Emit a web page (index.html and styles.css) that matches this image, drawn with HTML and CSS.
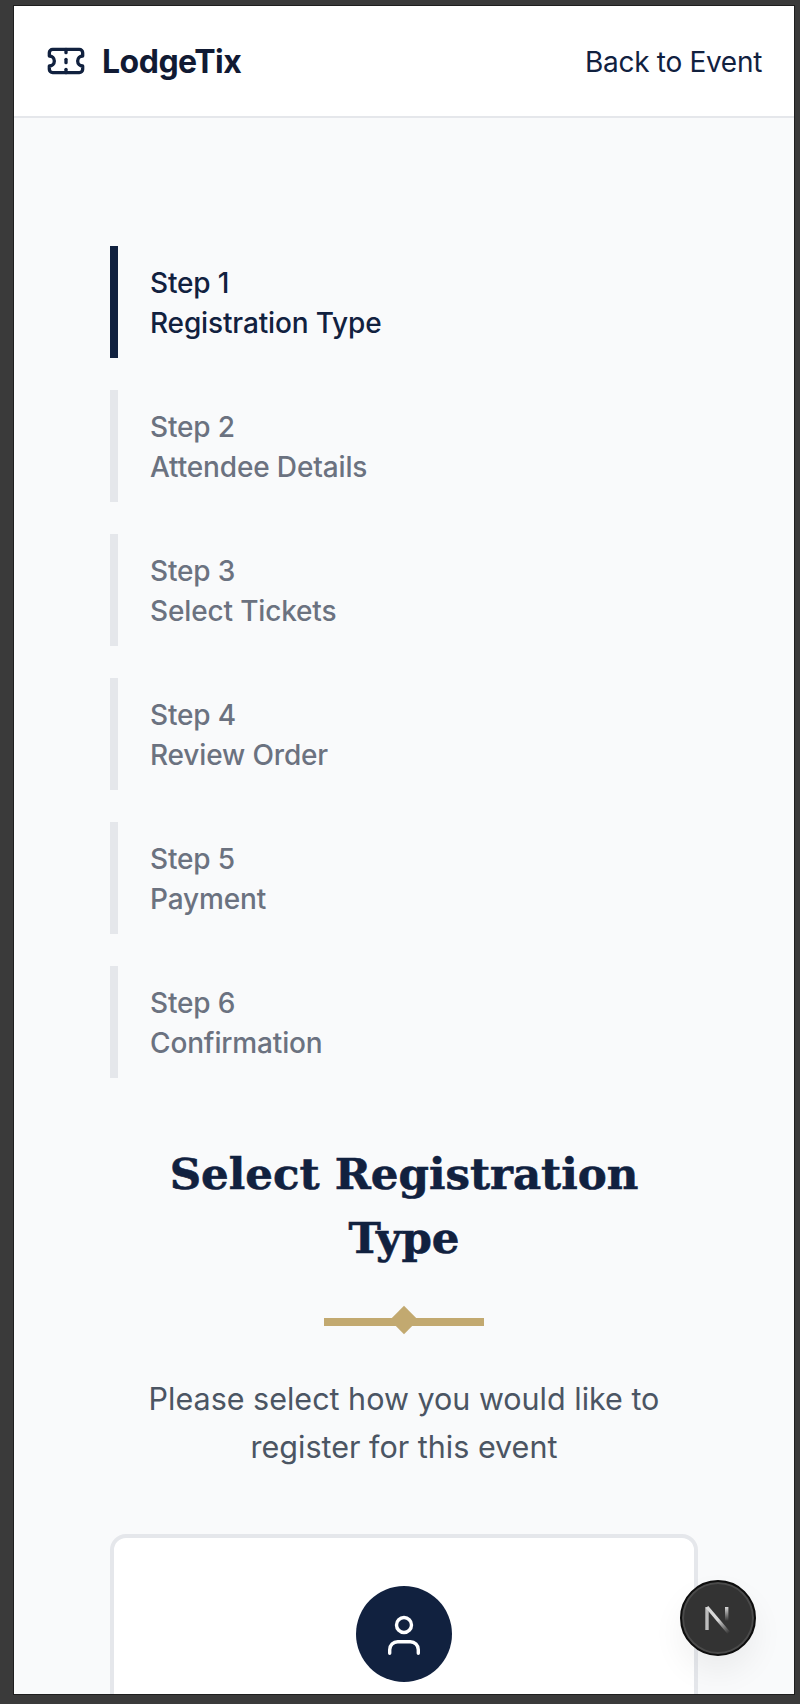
FILE: index.html
```html
<!DOCTYPE html>
<html lang="en">
<head>
    <meta charset="UTF-8">
    <meta name="viewport" content="width=device-width, initial-scale=1.0">
    <title>LodgeTix - Registration</title>
    <link rel="stylesheet" href="styles.css">
</head>
<body>
    <div class="window">
        <header class="topbar">
            <a class="brand" href="#">
                <svg class="brand-icon" viewBox="0 0 24 24" fill="none" stroke="#11213f" stroke-width="2" stroke-linecap="round" stroke-linejoin="round">
                    <path d="M2 9a3 3 0 0 1 0 6v2a2 2 0 0 0 2 2h16a2 2 0 0 0 2-2v-2a3 3 0 0 1 0-6V7a2 2 0 0 0-2-2H4a2 2 0 0 0-2 2Z"/>
                    <path d="M12 5v2"/>
                    <path d="M12 17v2"/>
                    <path d="M12 11v2"/>
                </svg>
                <span>LodgeTix</span>
            </a>
            <a class="back-link" href="#">Back to Event</a>
        </header>

        <main class="content">
            <ol class="steps">
                <li class="step active">Step 1<br>Registration Type</li>
                <li class="step">Step 2<br>Attendee Details</li>
                <li class="step">Step 3<br>Select Tickets</li>
                <li class="step">Step 4<br>Review Order</li>
                <li class="step">Step 5<br>Payment</li>
                <li class="step">Step 6<br>Confirmation</li>
            </ol>

            <section class="intro">
                <h1>Select Registration Type</h1>
                <div class="divider"><span class="diamond"></span></div>
                <p>Please select how you would like to register for this event</p>
            </section>

            <div class="card">
                <div class="card-icon">
                    <svg viewBox="0 0 48 48" width="48" height="48" fill="none" stroke="#fff" stroke-width="3.4" stroke-linecap="round">
                        <circle cx="24" cy="15" r="7.5"/>
                        <path d="M9.7 43.3v-3.6a8 8 0 0 1 8-8h12.6a8 8 0 0 1 8 8v3.6"/>
                    </svg>
                </div>
            </div>
        </main>

        <button class="dev-badge" type="button" aria-label="Open Next.js Dev Tools">
            <svg viewBox="0 0 32 32" width="32" height="32" fill="none" stroke-width="3.4">
                <defs>
                    <linearGradient id="fadeStem" x1="0" y1="0" x2="0" y2="1">
                        <stop offset="0" stop-color="#d8d8d8"/>
                        <stop offset="1" stop-color="#d8d8d8" stop-opacity="0"/>
                    </linearGradient>
                    <linearGradient id="fadeDiag" gradientUnits="userSpaceOnUse" x1="5" y1="5" x2="27" y2="31">
                        <stop offset="0.5" stop-color="#d8d8d8"/>
                        <stop offset="1" stop-color="#d8d8d8" stop-opacity="0"/>
                    </linearGradient>
                </defs>
                <path d="M5 28V5" stroke="#bdbdbd"/>
                <path d="M5 5L27 31" stroke="url(#fadeDiag)"/>
                <rect x="23" y="5" width="3.4" height="14" fill="url(#fadeStem)" stroke="none"/>
            </svg>
        </button>
    </div>
</body>
</html>
```

FILE: styles.css
```css
* {
    box-sizing: border-box;
}
html, body {
    height: 100%;
}
body {
    margin: 0;
    padding: 5px 5px 9px 13px;
    background-color: #3a3a3a;
    font-family: Inter, "Noto Sans", sans-serif;
    overflow: hidden;
}
.window {
    position: relative;
    height: 100%;
    background-color: #f9fafb;
    border: 1px solid #1e1e1e;
    overflow: hidden;
}
.topbar {
    display: flex;
    align-items: center;
    justify-content: space-between;
    height: 112px;
    padding: 0 32px;
    background: #ffffff;
    border-bottom: 2px solid #e5e7eb;
}
.brand {
    display: flex;
    align-items: center;
    gap: 16px;
    color: #111a33;
    font-size: 32px;
    font-weight: 700;
    letter-spacing: -0.5px;
    text-decoration: none;
}
.brand-icon {
    width: 40px;
    height: 40px;
}
.back-link {
    padding-top: 2px;
    color: #11213f;
    font-size: 28px;
    letter-spacing: -0.3px;
    text-decoration: none;
}
.content {
    padding: 128px 96px 0;
}
.steps {
    display: flex;
    flex-direction: column;
    gap: 32px;
    margin: 0;
    padding: 0;
    list-style: none;
}
.step {
    padding: 17px 32px 15px;
    border-left: 8px solid #e5e7eb;
    color: #6b7280;
    font-size: 28px;
    font-weight: 500;
    letter-spacing: -0.15px;
    line-height: 40px;
}
.step.active {
    border-left-color: #11213f;
    color: #11213f;
}
.intro {
    margin-top: 64px;
    text-align: center;
}
h1 {
    max-width: 500px;
    margin: 0 auto;
    color: #11213f;
    font-family: "DejaVu Serif", serif;
    font-size: 43.5px;
    font-weight: 700;
    line-height: 64px;
    -webkit-text-stroke: 0.6px #11213f;
}
.divider {
    position: relative;
    width: 160px;
    height: 8px;
    margin: 48px auto 49px;
    background-color: #c2a970;
}
.diamond {
    position: absolute;
    top: -8px;
    left: 70px;
    width: 20px;
    height: 20px;
    background-color: #c2a970;
    transform: rotate(45deg);
}
.intro p {
    margin: 0;
    color: #4b5563;
    font-size: 30.5px;
    line-height: 48px;
}
.card {
    margin-top: 63px;
    height: 400px;
    padding: 48px;
    background: #ffffff;
    border: 4px solid #e5e7eb;
    border-radius: 16px;
}
.card-icon {
    display: flex;
    align-items: center;
    justify-content: center;
    width: 96px;
    height: 96px;
    margin: 0 auto;
    border-radius: 50%;
    background-color: #11213f;
}
.dev-badge {
    position: absolute;
    right: 38px;
    bottom: 38px;
    display: flex;
    align-items: center;
    justify-content: center;
    width: 76px;
    height: 76px;
    padding: 0;
    background-color: #333333;
    border: 2px solid #0d0d0d;
    border-radius: 50%;
    box-shadow: inset 0 0 0 2px #4a4a4a, 0 16px 32px rgba(0, 0, 0, 0.06);
}
```
